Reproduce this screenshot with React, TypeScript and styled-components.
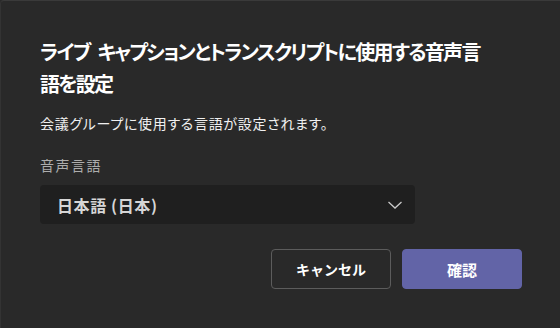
import React from "react";
import styled, { createGlobalStyle } from "styled-components";

const GlobalStyle = createGlobalStyle`
  html, body {
    margin: 0;
    padding: 0;
    background: #292929;
  }
  body {
    font-family: "Noto Sans CJK JP", "Noto Sans", sans-serif;
    -webkit-font-smoothing: antialiased;
  }
  * { box-sizing: border-box; }
`;

const Dialog = styled.div`
  width: 560px;
  height: 328px;
  background: #292929;
  border-top: 1px solid #3a3a3a;
  border-left: 1px solid #333333;
  border-top-left-radius: 4px;
  padding: 35px 38px 0 39px;
  display: flex;
  flex-direction: column;
  overflow: hidden;
`;

const Title = styled.h1`
  margin: 0;
  max-width: 448px;
  font-size: 20px;
  line-height: 32px;
  font-weight: 700;
  color: #ffffff;
  font-feature-settings: "palt";
  letter-spacing: -1.7px;
  word-spacing: 5px;
`;

const Subtitle = styled.p`
  margin: 13px 0 0;
  font-size: 14px;
  line-height: 20px;
  color: #f0f0f0;
  font-feature-settings: "palt";
  letter-spacing: 0.7px;
`;

const Label = styled.label`
  margin-top: 22px;
  font-size: 14px;
  line-height: 20px;
  color: #adadad;
  letter-spacing: 1.5px;
`;

const Select = styled.div`
  margin-top: 10px;
  width: 375px;
  height: 39px;
  background: #1f1f1f;
  border-radius: 4px;
  display: flex;
  align-items: center;
  justify-content: space-between;
  padding: 0 10px 0 17px;
`;

const SelectValue = styled.span`
  font-size: 16px;
  font-weight: 700;
  color: #d6d6d6;
  letter-spacing: 0.6px;
`;

const Footer = styled.div`
  margin-top: 25px;
  display: flex;
  justify-content: flex-end;
  gap: 11px;
`;

const Button = styled.button<{ $primary?: boolean }>`
  width: 120px;
  height: 40px;
  border-radius: 4px;
  font-family: inherit;
  font-size: ${(p) => (p.$primary ? "15px" : "14px")};
  font-weight: 700;
  color: #ffffff;
  cursor: pointer;
  background: ${(p) => (p.$primary ? "#6264a7" : "transparent")};
  border: 1px solid ${(p) => (p.$primary ? "#6264a7" : "#5c5c5c")};
`;

const Chevron = () => (
  <svg width="20" height="20" viewBox="0 0 20 20" fill="none">
    <path d="M3.5 7 L10 13 L16.5 7" stroke="#c8c8c8" strokeWidth="1.3" />
  </svg>
);

export default function App() {
  return (
    <>
      <GlobalStyle />
      <Dialog>
        <Title>ライブ キャプションとトランスクリプトに使用する音声言語を設定</Title>
        <Subtitle>会議グループに使用する言語が設定されます。</Subtitle>
        <Label>音声言語</Label>
        <Select>
          <SelectValue>日本語 (日本)</SelectValue>
          <Chevron />
        </Select>
        <Footer>
          <Button>キャンセル</Button>
          <Button $primary>確認</Button>
        </Footer>
      </Dialog>
    </>
  );
}
